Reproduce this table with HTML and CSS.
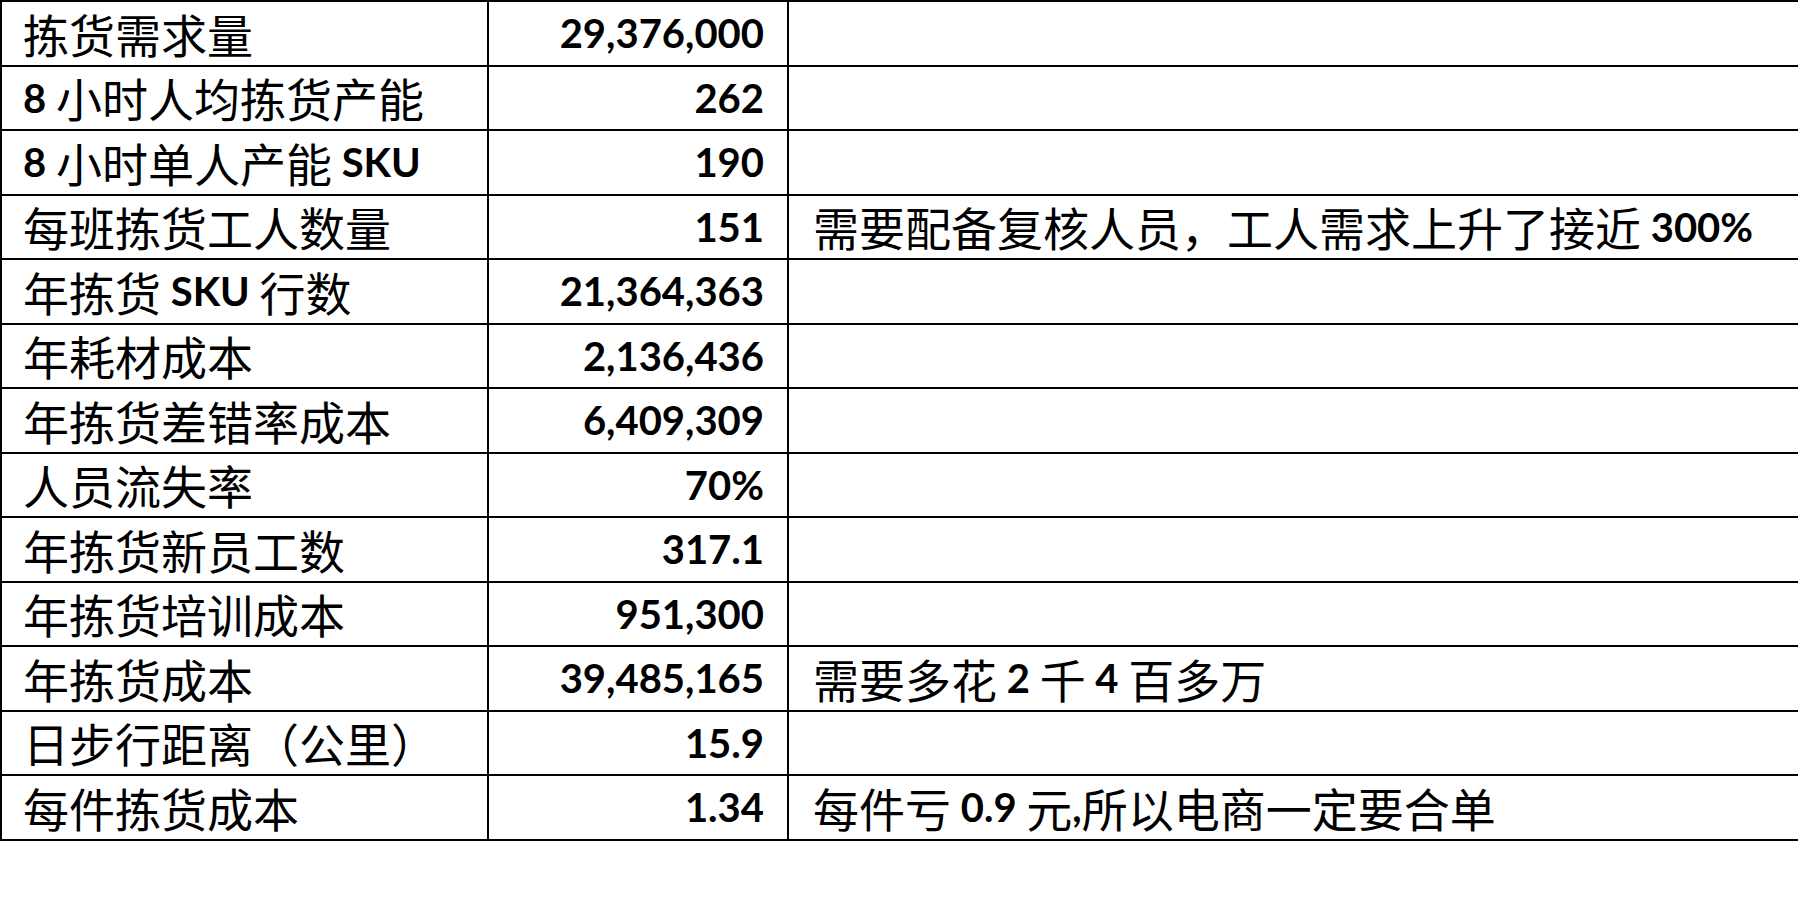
FILE: index.html
```html
<!DOCTYPE html>
<html lang="zh-CN">
<head>
<meta charset="utf-8">
<title>拣货成本</title>
<link rel="stylesheet" href="styles.css">
</head>
<body>
<div class="sheet">
  <div class="cell label">拣货需求量</div>
  <div class="cell value"><span class="n">29,376,000</span></div>
  <div class="cell note"></div>

  <div class="cell label"><span class="n">8 </span>小时人均拣货产能</div>
  <div class="cell value"><span class="n">262</span></div>
  <div class="cell note"></div>

  <div class="cell label"><span class="n">8 </span>小时单人产能<span class="n"> SKU</span></div>
  <div class="cell value"><span class="n">190</span></div>
  <div class="cell note"></div>

  <div class="cell label">每班拣货工人数量</div>
  <div class="cell value"><span class="n">151</span></div>
  <div class="cell note">需要配备复核人员，工人需求上升了接近<span class="n"> 300%</span></div>

  <div class="cell label">年拣货<span class="n"> SKU </span>行数</div>
  <div class="cell value"><span class="n">21,364,363</span></div>
  <div class="cell note"></div>

  <div class="cell label">年耗材成本</div>
  <div class="cell value"><span class="n">2,136,436</span></div>
  <div class="cell note"></div>

  <div class="cell label">年拣货差错率成本</div>
  <div class="cell value"><span class="n">6,409,309</span></div>
  <div class="cell note"></div>

  <div class="cell label">人员流失率</div>
  <div class="cell value"><span class="n">70%</span></div>
  <div class="cell note"></div>

  <div class="cell label">年拣货新员工数</div>
  <div class="cell value"><span class="n">317.1</span></div>
  <div class="cell note"></div>

  <div class="cell label">年拣货培训成本</div>
  <div class="cell value"><span class="n">951,300</span></div>
  <div class="cell note"></div>

  <div class="cell label">年拣货成本</div>
  <div class="cell value"><span class="n">39,485,165</span></div>
  <div class="cell note">需要多花<span class="n"> 2 </span>千<span class="n"> 4 </span>百多万</div>

  <div class="cell label">日步行距离（公里）</div>
  <div class="cell value"><span class="n">15.9</span></div>
  <div class="cell note"></div>

  <div class="cell label">每件拣货成本</div>
  <div class="cell value"><span class="n">1.34</span></div>
  <div class="cell note">每件亏<span class="n"> 0.9 </span>元<span class="n">,</span>所以电商一定要合单</div>
</div>
</body>
</html>
```

FILE: styles.css
```css
html, body {
  margin: 0;
  padding: 0;
  background: #ffffff;
  overflow: hidden;
}

body {
  width: 1798px;
  height: 904px;
  font-family: "Noto Sans CJK SC", "Noto Sans", sans-serif;
  color: #000000;
}

.sheet {
  display: grid;
  grid-template-columns: 487px 300px 1013px;
  grid-template-rows: repeat(13, 64.5px);
  width: 1802px;
  border-top: 2px solid #000;
  border-left: 2px solid #000;
  box-sizing: content-box;
}

.cell {
  display: flex;
  align-items: center;
  border-right: 2px solid #000;
  border-bottom: 2px solid #000;
  font-size: 46px;
  line-height: 1.25;
  white-space: nowrap;
}

.label {
  padding-left: 21px;
}

.value {
  justify-content: flex-end;
  padding-right: 23px;
}

.note {
  padding-left: 24px;
}

.n {
  font-family: "Lato", "Liberation Sans", sans-serif;
  font-weight: 700;
  font-size: 40px;
  white-space: pre;
}
```
